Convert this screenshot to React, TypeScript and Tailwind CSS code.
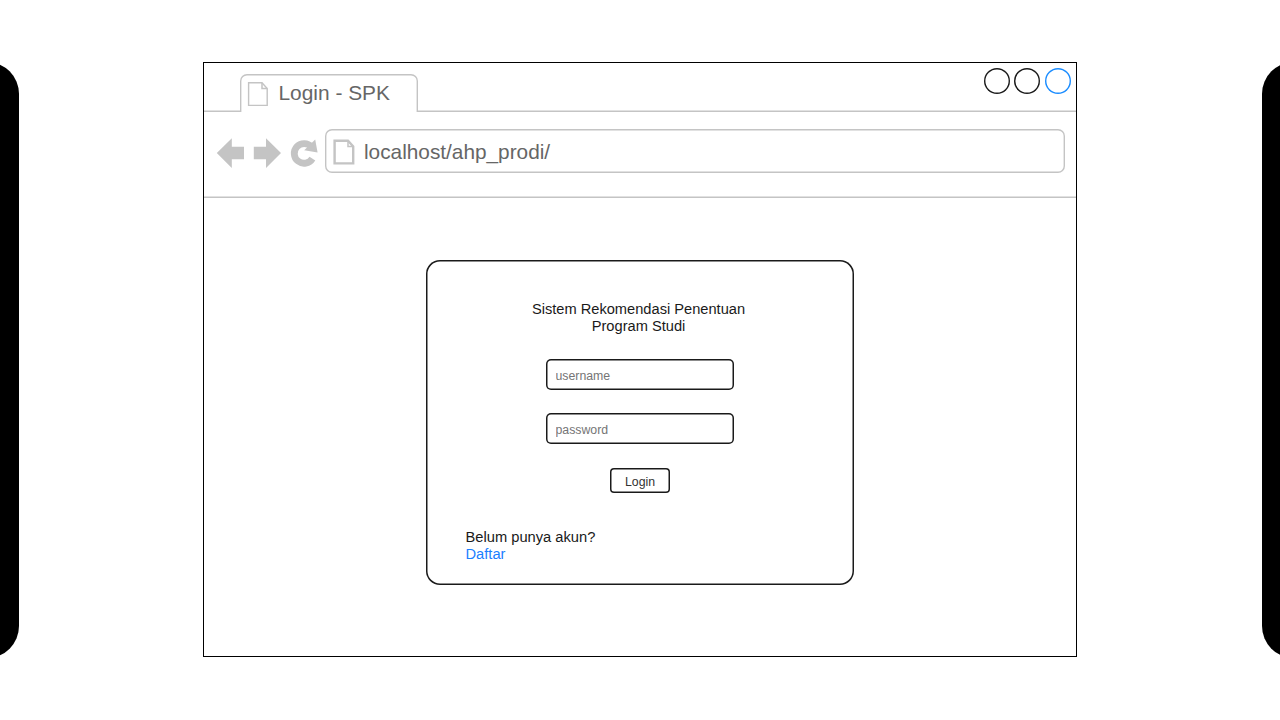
function PageIcon({ className, stroke }: { className: string; stroke: number }) {
  return (
    <svg className={className} viewBox="0 0 22 26" fill="none" stroke="#c4c4c4" strokeWidth={stroke}>
      <path d="M1.6 1.8H15L20.2 7.4V24.4H1.6Z" />
      <path d="M15 1.8V7.4H20.2" strokeWidth={1.5} />
    </svg>
  );
}

function TabStrip() {
  return (
    <div className="flex h-[49px] shrink-0 items-end">
      <div className="h-full w-[36px] shadow-[inset_0_-1.4px_0_0_#c4c4c4]" />
      <div className="h-[38px] w-[178px] overflow-hidden">
        <div className="flex h-[48px] items-start rounded-[7px] pl-[7px] pt-[7px] shadow-[inset_0_0_0_1.4px_#c4c4c4]">
          <PageIcon className="h-[26px] w-[22px] shrink-0" stroke={1.4} />
          <span className="ml-[9.5px] whitespace-nowrap text-[20.9px] leading-[24px] text-[#666666]">Login - SPK</span>
        </div>
      </div>
      <div className="flex h-full flex-1 items-start justify-end gap-[4.6px] pr-[5px] pt-[5px] shadow-[inset_0_-1.4px_0_0_#c4c4c4]">
        <span className="size-[26px] rounded-full shadow-[inset_0_0_0_1.4px_#1a1a1a]" />
        <span className="size-[26px] rounded-full shadow-[inset_0_0_0_1.4px_#1a1a1a]" />
        <span className="size-[26px] rounded-full shadow-[inset_0_0_0_1.4px_#1a8cff]" />
      </div>
    </div>
  );
}

function Toolbar() {
  return (
    <div className="flex h-[86px] shrink-0 items-start pl-[12px] pr-[11px] pt-[17px] shadow-[inset_0_-1.4px_0_0_#c4c4c4]">
      <svg className="h-[44px] w-[109px] shrink-0" viewBox="216 129 109 44" fill="#c4c4c4">
        <path d="M216.8 153L231.8 138.2V146.8H244V159.2H231.8V168Z" />
        <path d="M281 153L266 138.2V146.8H253.8V159.2H266V168Z" />
        <path d="M311.5 147A9.8 9.8 0 1 0 312.4 158.6" fill="none" stroke="#c4c4c4" strokeWidth={6.8} />
        <path d="M315.2 139.6L317.6 152.5L304.2 150.3Z" />
      </svg>
      <div className="flex h-[44px] flex-1 items-center rounded-[7px] pl-[8px] pt-[1px] shadow-[inset_0_0_0_1.4px_#c4c4c4]">
        <PageIcon className="h-[26px] w-[22px] shrink-0" stroke={2.4} />
        <span className="ml-[9px] whitespace-nowrap text-[20.8px] leading-[24px] text-[#666666]">localhost/ahp_prodi/</span>
      </div>
    </div>
  );
}

function LoginCard() {
  return (
    <form className="flex h-[324.5px] w-[428px] flex-col items-center rounded-[14px] pt-[41px] shadow-[inset_0_0_0_1.5px_#1a1a1a]">
      <h1 className="mr-[3px] text-center text-[14.65px] leading-[17.2px] text-[#1a1a1a]">
        Sistem Rekomendasi Penentuan
        <br />
        Program Studi
      </h1>
      <input
        type="text"
        placeholder="username"
        className="mt-[23.6px] h-[31px] w-[188px] rounded-[5px] px-[9.5px] pt-[3px] text-[12.3px] shadow-[inset_0_0_0_1.5px_#1a1a1a] placeholder:text-[#757575]"
      />
      <input
        type="password"
        placeholder="password"
        className="mt-[23px] h-[31px] w-[188px] rounded-[5px] px-[9.5px] pt-[3px] text-[12.3px] shadow-[inset_0_0_0_1.5px_#1a1a1a] placeholder:text-[#757575]"
      />
      <button
        type="button"
        className="mt-[24px] h-[25px] w-[60px] rounded-[4px] pt-[3px] text-[12.3px] leading-[20px] text-[#333333] shadow-[inset_0_0_0_1.5px_#1a1a1a]"
      >
        Login
      </button>
      <p className="mt-[36px] w-full pl-[39.5px] text-[14.7px] leading-[17px] text-[#1a1a1a]">
        Belum punya akun?
        <br />
        <a className="text-[#1a80ff]">Daftar</a>
      </p>
    </form>
  );
}

export default function App() {
  return (
    <main className="flex h-[720px] w-[1280px] items-start justify-between overflow-hidden bg-white pt-[62px] font-['Liberation_Sans',Arial,sans-serif]">
      <div className="-ml-[60px] h-[596px] w-[79px] shrink-0 rounded-[32px] bg-black" />
      <section className="-ml-[1px] flex h-[595px] w-[874px] shrink-0 flex-col border border-black">
        <TabStrip />
        <Toolbar />
        <div className="flex flex-1 items-start justify-center pt-[62px]">
          <LoginCard />
        </div>
      </section>
      <div className="-mr-[60px] h-[596px] w-[78px] shrink-0 rounded-[32px] bg-black" />
    </main>
  );
}
